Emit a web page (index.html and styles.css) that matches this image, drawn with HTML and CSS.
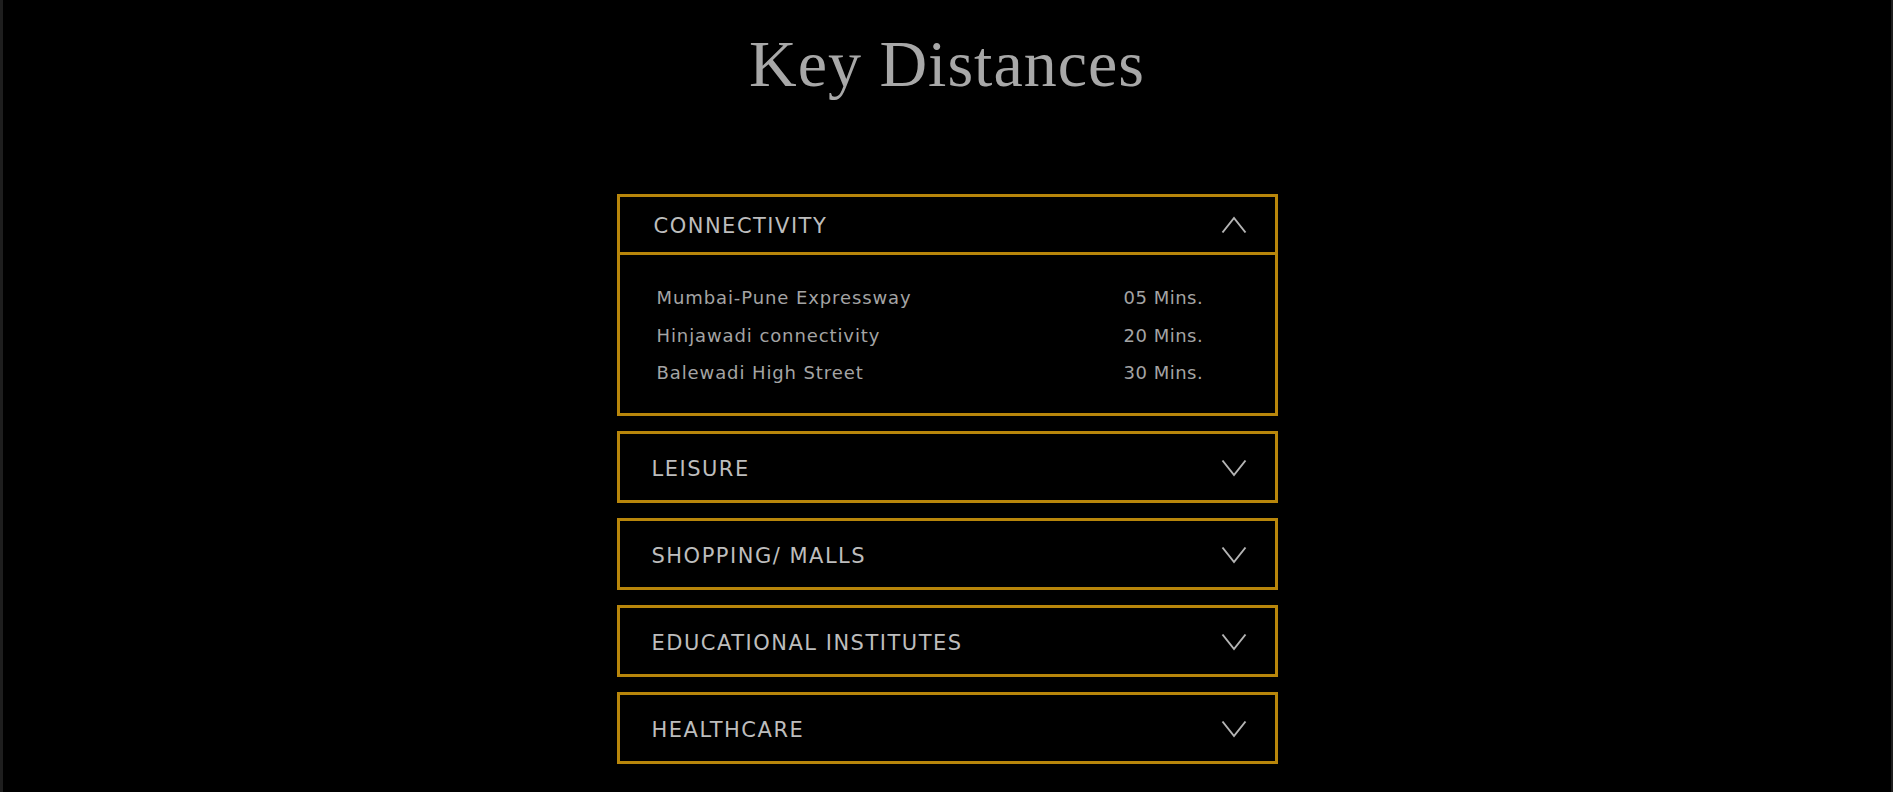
FILE: index.html
```html
<!DOCTYPE html>
<html lang="en">
<head>
<meta charset="utf-8">
<title>Key Distances</title>
<link rel="stylesheet" href="styles.css">
</head>
<body>
<main class="page">
  <h1 class="title">Key Distances</h1>
  <section class="accordion">
    <div class="item is-open">
      <div class="item-head">
        <span class="item-title">CONNECTIVITY</span>
        <svg class="chev" width="26" height="18" viewBox="0 0 26 18"><polyline points="1.5,16.5 13,2 24.5,16.5" fill="none" stroke="#b4b4b4" stroke-width="2"/></svg>
      </div>
      <div class="item-body">
        <span>Mumbai-Pune Expressway</span><span class="mins">05 Mins.</span>
        <span>Hinjawadi connectivity</span><span class="mins">20 Mins.</span>
        <span>Balewadi High Street</span><span class="mins">30 Mins.</span>
      </div>
    </div>
    <div class="item">
      <div class="item-head">
        <span class="item-title">LEISURE</span>
        <svg class="chev" width="26" height="18" viewBox="0 0 26 18"><polyline points="1.5,1.5 13,16 24.5,1.5" fill="none" stroke="#b4b4b4" stroke-width="2"/></svg>
      </div>
    </div>
    <div class="item">
      <div class="item-head">
        <span class="item-title">SHOPPING/ MALLS</span>
        <svg class="chev" width="26" height="18" viewBox="0 0 26 18"><polyline points="1.5,1.5 13,16 24.5,1.5" fill="none" stroke="#b4b4b4" stroke-width="2"/></svg>
      </div>
    </div>
    <div class="item">
      <div class="item-head">
        <span class="item-title">EDUCATIONAL INSTITUTES</span>
        <svg class="chev" width="26" height="18" viewBox="0 0 26 18"><polyline points="1.5,1.5 13,16 24.5,1.5" fill="none" stroke="#b4b4b4" stroke-width="2"/></svg>
      </div>
    </div>
    <div class="item">
      <div class="item-head">
        <span class="item-title">HEALTHCARE</span>
        <svg class="chev" width="26" height="18" viewBox="0 0 26 18"><polyline points="1.5,1.5 13,16 24.5,1.5" fill="none" stroke="#b4b4b4" stroke-width="2"/></svg>
      </div>
    </div>
  </section>
</main>
</body>
</html>
```
FILE: styles.css
```css
html, body {
  margin: 0;
  padding: 0;
  background: #000;
}

.page {
  box-sizing: border-box;
  min-height: 100vh;
  border-left: 3px solid #1e1e1e;
  border-right: 2px solid #1e1e1e;
  display: flex;
  flex-direction: column;
  align-items: center;
}

.title {
  margin: 0;
  padding-top: 26px;
  height: 76px;
  font-family: "Liberation Serif", serif;
  font-weight: normal;
  font-size: 66px;
  line-height: 76px;
  letter-spacing: 1px;
  color: #a8a8a8;
}

.accordion {
  margin-top: 92px;
  width: 661px;
  display: flex;
  flex-direction: column;
  gap: 15px;
}

.item {
  box-sizing: border-box;
  border: 3px solid #b8860b;
}

.item-head {
  box-sizing: border-box;
  height: 66px;
  display: flex;
  align-items: center;
  justify-content: space-between;
  padding: 3px 28px 0 32px;
}

.item-title {
  font-family: "DejaVu Sans", sans-serif;
  font-size: 21px;
  letter-spacing: 1.5px;
  color: #bdbdbd;
  padding-top: 1px;
}

.chev {
  display: block;
}

.is-open .item-head {
  height: 58px;
  padding-top: 1px;
  padding-left: 34px;
  border-bottom: 3px solid #b8860b;
}

.item-body {
  display: grid;
  grid-template-columns: 467px 1fr;
  padding: 24px 0 21px 37px;
  font-family: "DejaVu Sans", sans-serif;
  font-size: 18px;
  letter-spacing: 0.9px;
  line-height: 37.5px;
  color: #a4a4a4;
}

.item-body .mins {
  letter-spacing: 0.5px;
}
```
